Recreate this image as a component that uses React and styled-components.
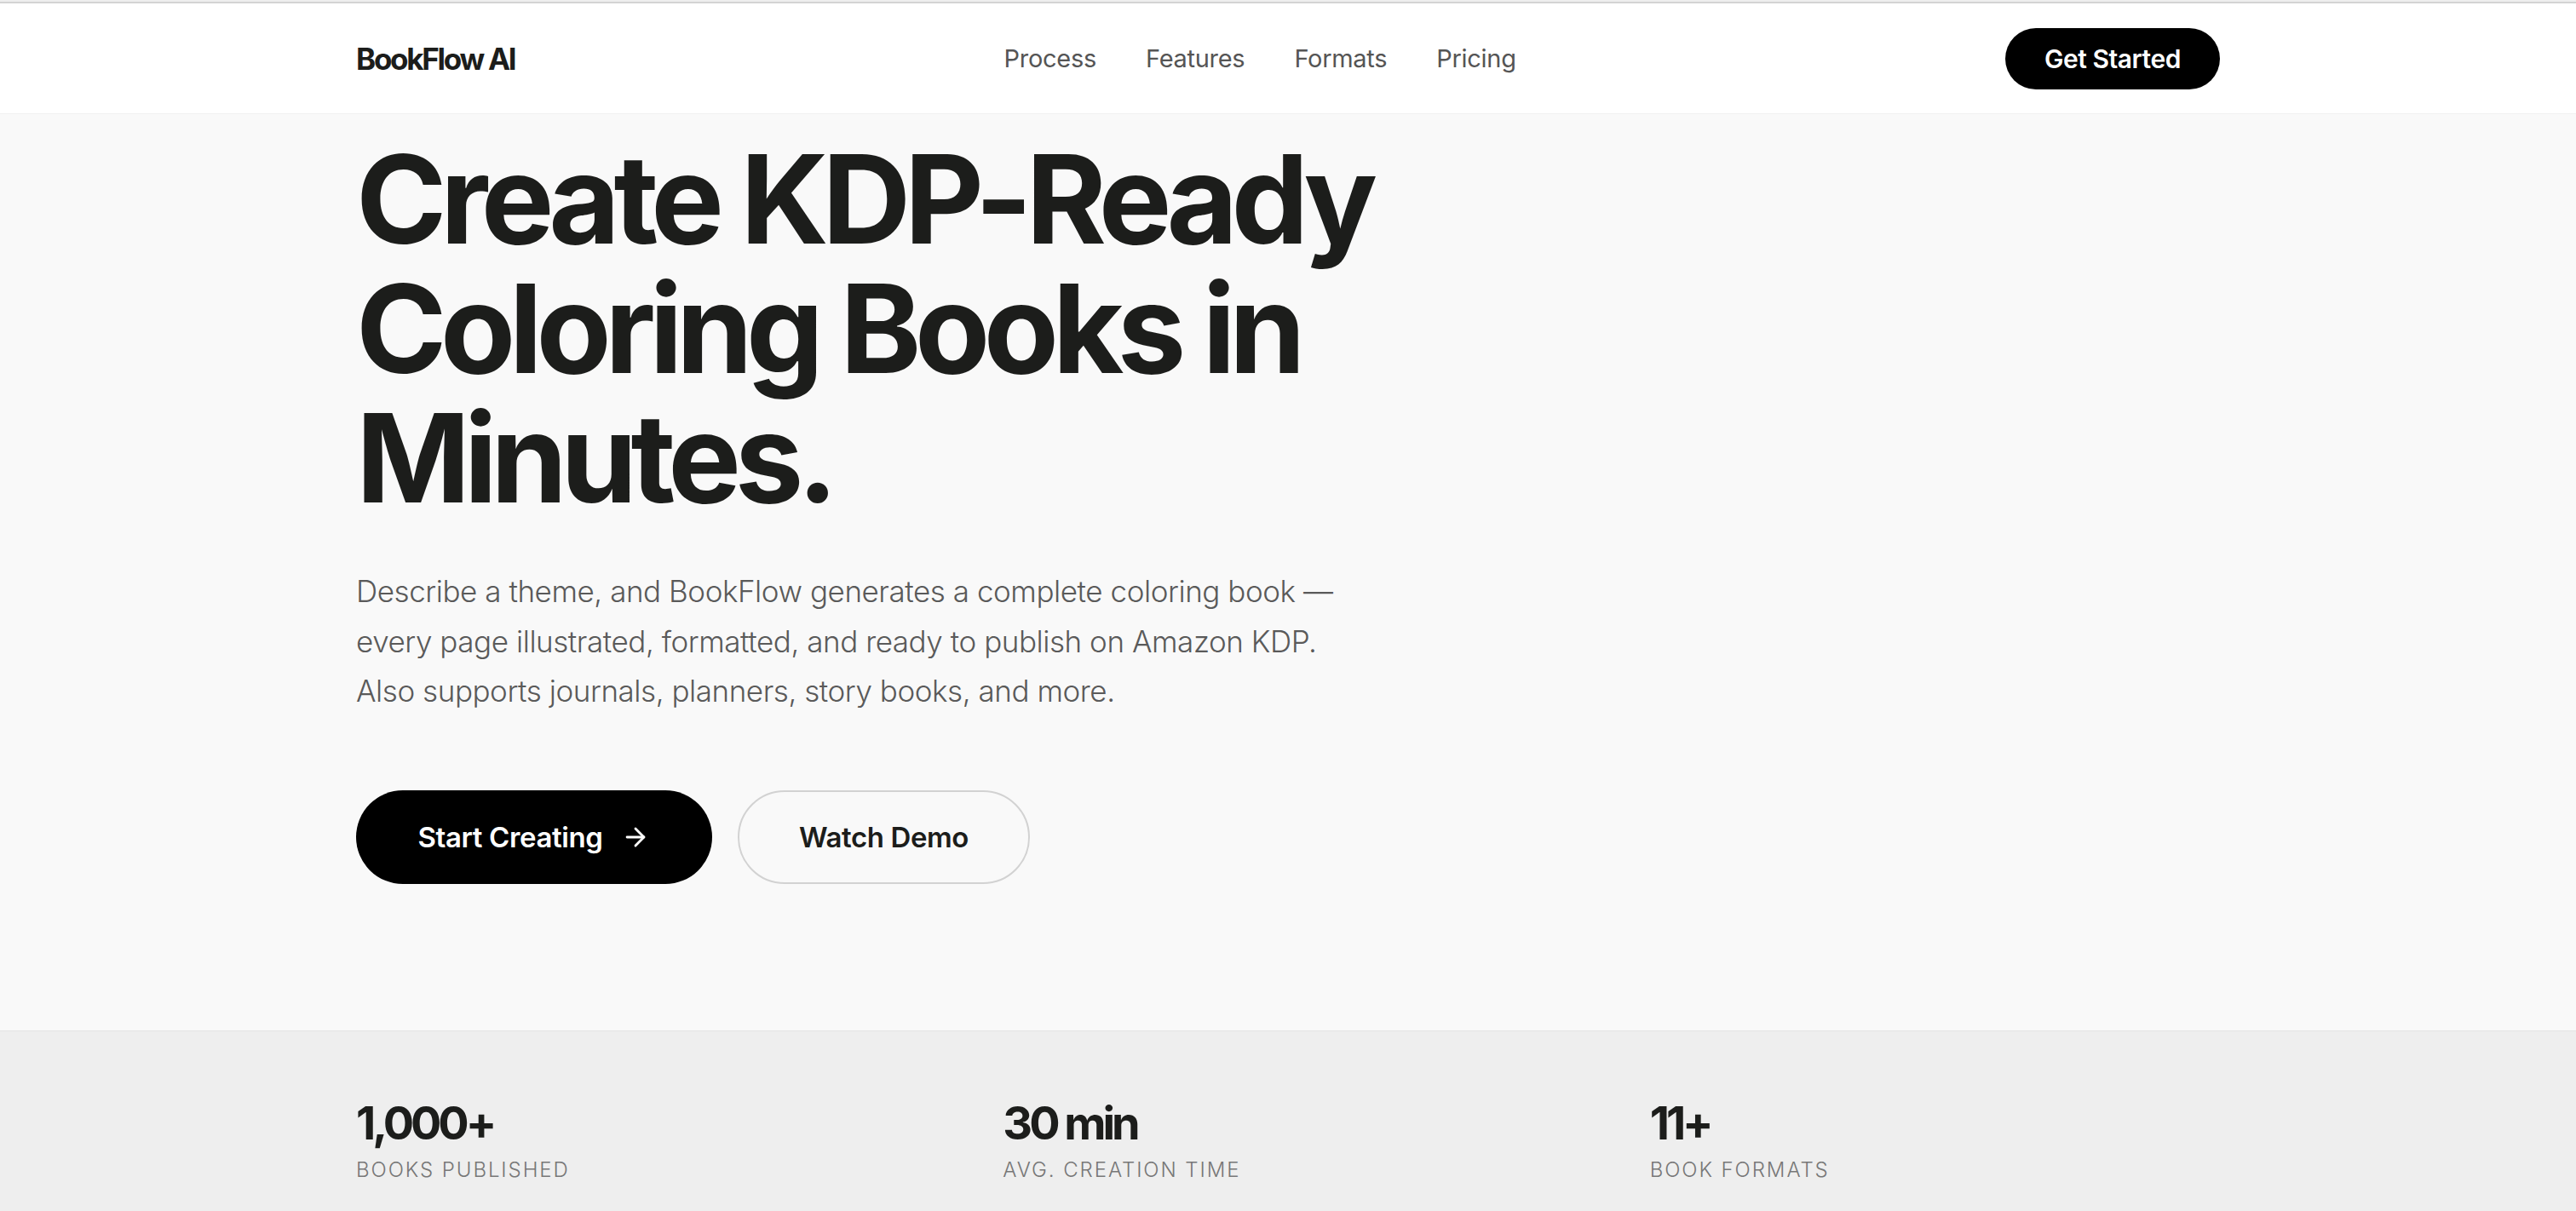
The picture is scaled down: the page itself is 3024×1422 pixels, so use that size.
import React from "react";
import styled, { createGlobalStyle } from "styled-components";
import { ArrowRight } from "lucide-react";

const GlobalStyle = createGlobalStyle`
  * {
    box-sizing: border-box;
  }
  html,
  body {
    margin: 0;
    padding: 0;
    background: #ffffff;
  }
  body {
    font-family: Inter, "Noto Sans", sans-serif;
    color: #1c1d1b;
    -webkit-font-smoothing: antialiased;
  }
`;

const navLinks = ["Process", "Features", "Formats", "Pricing"];

const stats = [
    { value: "1,000+", label: "Books Published" },
    { value: "30 min", label: "Avg. Creation Time" },
    { value: "11+", label: "Book Formats" },
];

const App = () => {
    return (
        <>
            <GlobalStyle />
            <Page>
                <Header>
                    <Container>
                        <Logo>BookFlow AI</Logo>
                        <Nav>
                            {navLinks.map((link) => (
                                <NavLink key={link} href={`#${link.toLowerCase()}`}>
                                    {link}
                                </NavLink>
                            ))}
                        </Nav>
                        <HeaderButton>Get Started</HeaderButton>
                    </Container>
                </Header>

                <Hero>
                    <Container $column>
                        <Title>
                            Create KDP-Ready
                            <br />
                            Coloring Books in
                            <br />
                            Minutes.
                        </Title>
                        <Lead>
                            Describe a theme, and BookFlow generates a complete coloring book —
                            <br />
                            every page illustrated, formatted, and ready to publish on Amazon KDP.
                            <br />
                            Also supports journals, planners, story books, and more.
                        </Lead>
                        <Actions>
                            <PrimaryButton>
                                Start Creating
                                <ArrowRight size={34} strokeWidth={2} />
                            </PrimaryButton>
                            <OutlineButton>Watch Demo</OutlineButton>
                        </Actions>
                    </Container>
                </Hero>

                <Stats>
                    <StatsGrid>
                        {stats.map((stat) => (
                            <Stat key={stat.label}>
                                <StatValue>{stat.value}</StatValue>
                                <StatLabel>{stat.label}</StatLabel>
                            </Stat>
                        ))}
                    </StatsGrid>
                </Stats>
            </Page>
        </>
    );
};

const Page = styled.div`
    min-height: 1422px;
    padding-top: 2px;
    background: #eeeeee;
`;
const Container = styled.div`
    width: 2188px;
    margin: 0 auto;
    display: flex;
    flex-direction: ${(props) => (props.$column ? "column" : "row")};
    align-items: ${(props) => (props.$column ? "flex-start" : "center")};
    justify-content: space-between;
`;
const Header = styled.header`
    height: 132px;
    background: #ffffff;
    border-top: 2px solid #d3d3d3;
    border-bottom: 1px solid #f1f1f1;
    display: flex;
    align-items: center;
`;
const Logo = styled.a`
    font-size: 35px;
    font-weight: 700;
    letter-spacing: -0.065em;
    color: #1c1d1b;
    text-decoration: none;
`;
const Nav = styled.nav`
    display: flex;
    align-items: center;
    gap: 58px;
`;
const NavLink = styled.a`
    font-size: 29px;
    font-weight: 400;
    letter-spacing: -0.01em;
    color: #555555;
    text-decoration: none;
`;
const HeaderButton = styled.button`
    height: 72px;
    padding: 0 46px;
    border: none;
    border-radius: 999px;
    background: #000000;
    color: #ffffff;
    font-family: inherit;
    font-size: 30px;
    font-weight: 600;
    letter-spacing: -0.015em;
    cursor: pointer;
`;
const Hero = styled.section`
    background: #f9f9f9;
    padding: 24px 0 172px;
`;
const Title = styled.h1`
    margin: 0;
    font-size: 144px;
    line-height: 152px;
    font-weight: 700;
    letter-spacing: -0.052em;
    color: #1c1d1b;
`;
const Lead = styled.p`
    margin: 51px 0 0;
    font-size: 35px;
    line-height: 58.5px;
    font-weight: 300;
    letter-spacing: -0.013em;
    color: #5a5a5a;
`;
const Actions = styled.div`
    margin-top: 87px;
    display: flex;
    align-items: center;
    gap: 30px;
`;
const PillButton = styled.button`
    height: 110px;
    border-radius: 999px;
    display: flex;
    align-items: center;
    justify-content: center;
    font-family: inherit;
    font-size: 33px;
    font-weight: 600;
    letter-spacing: -0.012em;
    cursor: pointer;
`;
const PrimaryButton = styled(PillButton)`
    width: 418px;
    gap: 22px;
    border: none;
    background: #000000;
    color: #ffffff;
`;
const OutlineButton = styled(PillButton)`
    width: 343px;
    border: 2px solid #d2d2d2;
    background: transparent;
    color: #1c1d1b;
`;
const Stats = styled.section`
    border-top: 1px solid #e3e3e3;
    padding-top: 80px;
`;
const StatsGrid = styled.div`
    width: 2188px;
    margin: 0 auto;
    display: grid;
    grid-template-columns: repeat(3, 1fr);
    column-gap: 90px;
`;
const Stat = styled.div`
    display: flex;
    flex-direction: column;
`;
const StatValue = styled.span`
    font-size: 54px;
    line-height: 56px;
    font-weight: 700;
    letter-spacing: -0.075em;
    color: #1c1d1b;
`;
const StatLabel = styled.span`
    margin-top: 11px;
    font-size: 24px;
    line-height: 32px;
    font-weight: 300;
    letter-spacing: 0.08em;
    text-transform: uppercase;
    color: #777777;
`;

export default App;
